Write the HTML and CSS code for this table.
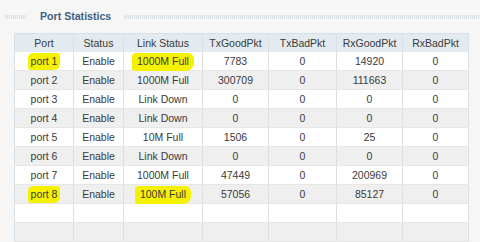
FILE: index.html
```html
<!DOCTYPE html>
<html>
<head>
<meta charset="utf-8">
<link rel="stylesheet" href="styles.css">
</head>
<body>
<div class="panel">
  <div class="titlebar">
    <span class="dots dots-left"></span>
    <span class="title">Port Statistics</span>
    <span class="dots dots-right"></span>
  </div>
  <table class="stats">
    <colgroup>
      <col class="c1"><col class="c2"><col class="c3"><col class="c4"><col class="c5"><col class="c6"><col class="c7">
    </colgroup>
    <thead>
      <tr><th>Port</th><th>Status</th><th>Link Status</th><th>TxGoodPkt</th><th>TxBadPkt</th><th>RxGoodPkt</th><th>RxBadPkt</th></tr>
    </thead>
    <tbody>
      <tr class="odd"><td><span class="hl">port 1</span></td><td>Enable</td><td><span class="hl hl-wide">1000M Full</span></td><td>7783</td><td>0</td><td>14920</td><td>0</td></tr>
      <tr class="even"><td>port 2</td><td>Enable</td><td>1000M Full</td><td>300709</td><td>0</td><td>111663</td><td>0</td></tr>
      <tr class="odd"><td>port 3</td><td>Enable</td><td>Link Down</td><td>0</td><td>0</td><td>0</td><td>0</td></tr>
      <tr class="even"><td>port 4</td><td>Enable</td><td>Link Down</td><td>0</td><td>0</td><td>0</td><td>0</td></tr>
      <tr class="odd"><td>port 5</td><td>Enable</td><td>10M Full</td><td>1506</td><td>0</td><td>25</td><td>0</td></tr>
      <tr class="even"><td>port 6</td><td>Enable</td><td>Link Down</td><td>0</td><td>0</td><td>0</td><td>0</td></tr>
      <tr class="odd"><td>port 7</td><td>Enable</td><td>1000M Full</td><td>47449</td><td>0</td><td>200969</td><td>0</td></tr>
      <tr class="even"><td><span class="hl">port 8</span></td><td>Enable</td><td><span class="hl hl-wide">100M Full</span></td><td>57056</td><td>0</td><td>85127</td><td>0</td></tr>
      <tr class="odd"><td></td><td></td><td></td><td></td><td></td><td></td><td></td></tr>
      <tr class="even"><td></td><td></td><td></td><td></td><td></td><td></td><td></td></tr>
    </tbody>
  </table>
</div>
</body>
</html>
```
FILE: styles.css
```css
html, body {
  margin: 0;
  padding: 0;
}
body {
  background: #f6f6f6;
  font-family: "Liberation Sans", Arial, sans-serif;
  width: 480px;
  height: 242px;
  overflow: hidden;
}
.panel {
  padding: 0 12px 0 14px;
}
.titlebar {
  display: flex;
  align-items: center;
  height: 33px;
  margin-left: -9px;
  margin-right: -12px;
}
.dots {
  height: 4px;
  background: repeating-linear-gradient(90deg, #d8dfe5 0 1px, #f0f2f4 1px 2px);
}
.dots-left {
  width: 22px;
}
.dots-right {
  flex: 1;
}
.title {
  font-weight: bold;
  font-size: 10.6px;
  color: #3d6183;
  padding: 0 13px 0 13px;
  margin-top: -2px;
}
.stats {
  border-collapse: collapse;
  table-layout: fixed;
  width: 454px;
  font-size: 10.5px;
  line-height: 12px;
  color: #3a3a3a;
  border-left: 1px solid #d5e0e8;
  border-right: 1px solid #d5e0e8;
}
.c1 { width: 59px; }
.c2 { width: 50px; }
.c3 { width: 79px; }
.c4 { width: 66px; }
.c5 { width: 68px; }
.c6 { width: 66px; }
.c7 { width: 66px; }
.stats th {
  background: #e4ebf0;
  font-weight: normal;
  height: 18px;
  padding: 0;
  text-align: center;
  color: #3a3a3a;
  border-left: 1px solid #d8e2ea;
  border-top: 1px solid #d5e0e8;
}
.stats td {
  height: 18px;
  padding: 0;
  text-align: center;
  border-left: 1px solid #dfdfdf;
  border-bottom: 1px solid #e6e6e6;
}
.stats th:first-child, .stats td:first-child {
  border-left: none;
}
.stats tr.odd td {
  background: #ffffff;
}
.stats tr.even td {
  background: #efefef;
}
.hl {
  background: #f5f200;
  border-radius: 5px 3px 6px 3px;
  padding: 2px 3px 3px 3px;
}
.hl-wide {
  padding: 2px 5px 4px 5px;
  border-radius: 4px 6px 8px 3px;
}
```
